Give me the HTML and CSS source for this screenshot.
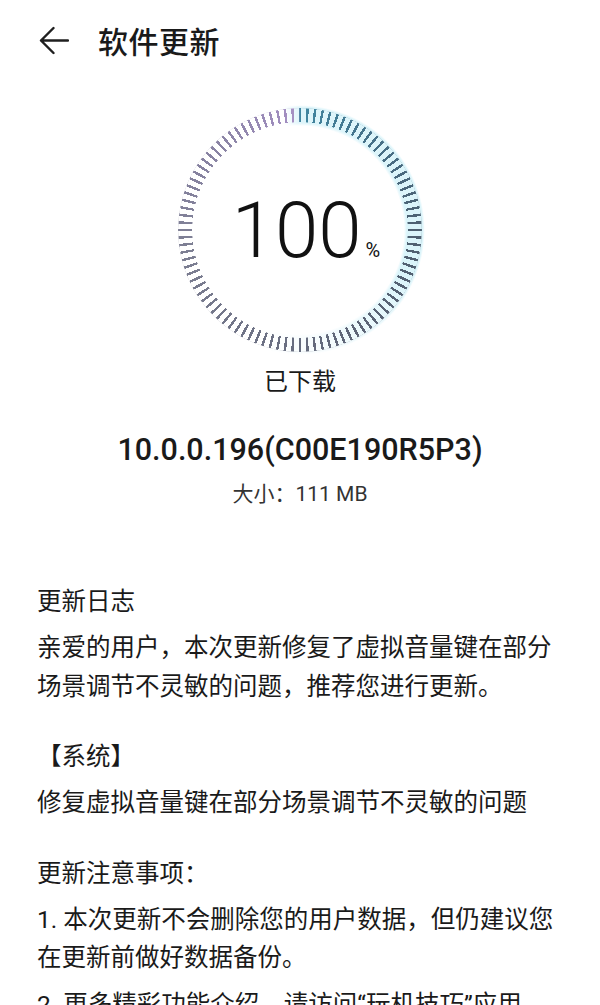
FILE: index.html
```html
<!DOCTYPE html>
<html lang="zh-CN">
<head>
    <meta charset="UTF-8">
    <meta name="viewport" content="width=device-width, initial-scale=1.0">
    <title>软件更新</title>
    <link rel="stylesheet" href="styles.css">
</head>
<body>
    <div class="header">
        <svg class="back" width="30" height="30" viewBox="0 0 30 30">
            <path d="M2 14.5 H29 M14.5 2 L2 14.5 L14.5 27" fill="none" stroke="#1f1f1f" stroke-width="2.4" stroke-linecap="round" stroke-linejoin="round"/>
        </svg>
        <h1 class="title">软件更新</h1>
    </div>

    <div class="dial">
        <div class="ticks"></div>
        <div class="value">100<span class="pct">%</span></div>
    </div>

    <p class="status">已下载</p>
    <p class="version">10.0.0.196(C00E190R5P3)</p>
    <p class="size">大小：111 MB</p>

    <div class="notes">
        <p class="head">更新日志</p>
        <p class="text">亲爱的用户，本次更新修复了虚拟音量键在部分场景调节不灵敏的问题，推荐您进行更新。</p>

        <p class="head sub">【系统】</p>
        <p class="text">修复虚拟音量键在部分场景调节不灵敏的问题</p>

        <p class="head sub">更新注意事项：</p>
        <p class="text">1. 本次更新不会删除您的用户数据，但仍建议您在更新前做好数据备份。</p>
        <p class="text item">2. 更多精彩功能介绍，请访问“玩机技巧”应用</p>
    </div>
</body>
</html>
```

FILE: styles.css
```css
body {
    margin: 0;
    background: #fff;
    color: #1a1a1a;
    font-family: "Roboto", "Noto Sans CJK SC", sans-serif;
    overflow: hidden;
}

p {
    margin: 0;
}

.header {
    height: 80px;
    display: flex;
    align-items: center;
    padding-left: 39px;
}

.back {
    margin-top: 1px;
}

.title {
    margin: 0 0 0 29px;
    font-size: 30px;
    font-weight: 500;
    letter-spacing: 0.5px;
}

/* progress ring */
.dial {
    position: relative;
    width: 244px;
    height: 244px;
    margin: 28px auto 0;
    display: flex;
    justify-content: center;
    align-items: center;
}

.dial::before {
    content: "";
    position: absolute;
    inset: -3px;
    border-radius: 50%;
    background: conic-gradient(rgba(200, 238, 247, 0.6) 0deg, rgba(205, 240, 248, 0.75) 110deg, rgba(225, 245, 250, 0.35) 165deg, rgba(255, 255, 255, 0) 200deg, rgba(255, 255, 255, 0) 352deg, rgba(200, 238, 247, 0.6) 360deg);
    -webkit-mask: radial-gradient(circle closest-side, transparent 104px, #000 107px, #000 123px, transparent 125px);
    mask: radial-gradient(circle closest-side, transparent 104px, #000 107px, #000 123px, transparent 125px);
    filter: blur(1.5px);
}

.ticks {
    position: absolute;
    inset: 0;
    border-radius: 50%;
    background: conic-gradient(#3f86a0 0deg, #46728a 35deg, #4d5f70 90deg, #5d6476 150deg, #6f7386 205deg, #7d7f93 260deg, #8b84a6 320deg, #a08dbf 352deg, #a892c4 359deg, #3f86a0 360deg);
    -webkit-mask: repeating-conic-gradient(from -0.6deg, #000 0 1.2deg, transparent 1.2deg 3.6deg), radial-gradient(circle closest-side, transparent 107.5px, #000 108px);
    -webkit-mask-composite: source-in;
    mask: repeating-conic-gradient(from -0.6deg, #000 0 1.2deg, transparent 1.2deg 3.6deg), radial-gradient(circle closest-side, transparent 107.5px, #000 108px);
    mask-composite: intersect;
}

.value {
    position: relative;
    font-family: "Roboto", sans-serif;
    font-weight: 300;
    font-size: 78px;
    line-height: 1;
    color: #111;
    margin-left: 12px;
    margin-top: 2px;
}

.pct {
    font-size: 20px;
    font-weight: 400;
    margin-left: 4px;
}

.status {
    margin-top: 15px;
    text-align: center;
    font-size: 24px;
    line-height: 30px;
}

.version {
    margin-top: 33px;
    text-align: center;
    font-size: 30.5px;
    font-weight: 500;
    line-height: 40px;
}

.size {
    margin-top: 10px;
    text-align: center;
    font-size: 21px;
    line-height: 28px;
    color: #333;
}

.notes {
    margin-top: 75px;
    padding: 0 30px 0 37px;
}

.head {
    font-size: 24.5px;
    line-height: 38px;
}

.head.sub {
    margin-top: 32px;
}

.text {
    margin-top: 8px;
    font-size: 24.5px;
    line-height: 38.5px;
}

.text.item {
    margin-top: 8px;
}
```
